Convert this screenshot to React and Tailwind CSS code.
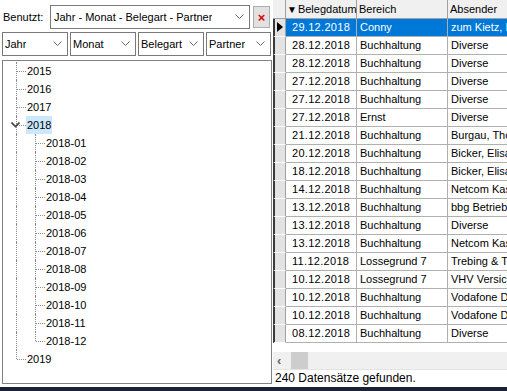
import React from "react";

const font = { fontFamily: '"Liberation Sans", Arial, sans-serif' };

const rows = [
  ["29.12.2018", "Conny", "zum Kietz, P"],
  ["28.12.2018", "Buchhaltung", "Diverse"],
  ["28.12.2018", "Buchhaltung", "Diverse"],
  ["27.12.2018", "Buchhaltung", "Diverse"],
  ["27.12.2018", "Buchhaltung", "Diverse"],
  ["27.12.2018", "Ernst", "Diverse"],
  ["21.12.2018", "Buchhaltung", "Burgau, Tho"],
  ["20.12.2018", "Buchhaltung", "Bicker, Elisa"],
  ["18.12.2018", "Buchhaltung", "Bicker, Elisa"],
  ["14.12.2018", "Buchhaltung", "Netcom Kas"],
  ["13.12.2018", "Buchhaltung", "bbg Betrieb"],
  ["13.12.2018", "Buchhaltung", "Diverse"],
  ["13.12.2018", "Buchhaltung", "Netcom Kas"],
  ["11.12.2018", "Lossegrund 7", "Trebing & Tr"],
  ["10.12.2018", "Lossegrund 7", "VHV Versich"],
  ["10.12.2018", "Buchhaltung", "Vodafone D"],
  ["10.12.2018", "Buchhaltung", "Vodafone D"],
  ["08.12.2018", "Buchhaltung", "Diverse"],
];

const months = ["01", "02", "03", "04", "05", "06", "07", "08", "09", "10", "11", "12"];

const Chevron = ({ className = "" }) => (
  <svg width="9" height="6" viewBox="0 0 9 6" className={className}>
    <path d="M0.5 0.5 L4.5 4.5 L8.5 0.5" fill="none" stroke="#6b6b6b" strokeWidth="1" />
  </svg>
);

const Combo = ({ label, className = "" }) => (
  <div
    className={`flex h-[24px] items-center justify-between border border-[#7a7a7a] bg-white pl-[2px] pr-[5px] text-[11px] text-black ${className}`}
  >
    <span className="truncate">{label}</span>
    <Chevron className="shrink-0" />
  </div>
);

const dotH = "border-t border-dotted border-[#8a8a8a]";
const dotV = "border-l border-dotted border-[#8a8a8a]";

const TreeRow = ({ children, selected, chevron, last, indent }) => (
  <div className="relative flex h-[18px] items-center">
    {indent && (
      <div className={`absolute left-[13px] top-0 ${dotV} h-[18px]`} />
    )}
    <div className={`absolute ${indent ? "left-[32px]" : "left-[13px]"} top-0 ${dotV} ${last ? "h-[9px]" : "h-[18px]"}`} />
    <div className={`${indent ? "ml-[33px]" : "ml-[14px]"} w-[9px] ${dotH}`} />
    {chevron && (
      <svg width="9" height="6" viewBox="0 0 9 6" className="absolute left-[8px] top-[6px]">
        <path d="M0.5 0.5 L4.5 4.5 L8.5 0.5" fill="none" stroke="#444" strokeWidth="1.6" />
      </svg>
    )}
    <span className={`px-[1px] leading-[18px] ${selected ? "bg-[#cce8ff]" : ""}`}>{children}</span>
  </div>
);

export default function App() {
  return (
    <div style={font} className="flex h-[391px] w-[507px] flex-col overflow-hidden bg-white text-[11px] text-black">
      <div className="flex min-h-0 flex-1">
        {/* left panel */}
        <div className="flex w-[273px] shrink-0 flex-col">
          <div className="flex h-[32px] items-center pl-[3px] pt-[2px]">
            <span className="w-[47px]">Benutzt:</span>
            <Combo label="Jahr - Monat - Belegart - Partner" className="w-[200px] pl-[3px]" />
            <div className="ml-[3px] flex h-[22px] w-[17px] items-center justify-center border border-[#adadad] bg-[#e1e1e1] text-[13px] font-bold leading-none text-[#e00000]">
              ×
            </div>
          </div>
          <div className="flex gap-[2px] pl-[2px]">
            <Combo label="Jahr" className="w-[66px]" />
            <Combo label="Monat" className="w-[66px]" />
            <Combo label="Belegart" className="w-[66px]" />
            <Combo label="Partner" className="w-[65px]" />
          </div>
          <div className="ml-[2px] mt-[4px] h-[324px] w-[270px] border border-[#828282] bg-white pt-[1px]">
            <TreeRow>2015</TreeRow>
            <TreeRow>2016</TreeRow>
            <TreeRow>2017</TreeRow>
            <TreeRow selected chevron>2018</TreeRow>
            {months.map((m, i) => (
              <TreeRow key={m} indent last={i === months.length - 1}>
                2018-{m}
              </TreeRow>
            ))}
            <TreeRow last>2019</TreeRow>
          </div>
        </div>

        {/* right grid */}
        <div className="flex min-w-0 flex-1 flex-col">
          <div className="flex h-[19px] border-b border-[#a0a0a0] bg-[#f0f0f0]">
            <div className="w-[13px] shrink-0 border-r border-[#a0a0a0]" />
            <div className="flex w-[71px] shrink-0 items-center border-r border-[#a0a0a0] pl-[1px]">
              <span className="mr-[1px] text-[10px]">▼</span>Belegdatum
            </div>
            <div className="flex w-[91px] shrink-0 items-center border-r border-[#a0a0a0] pl-[2px]">Bereich</div>
            <div className="flex flex-1 items-center whitespace-nowrap pl-[2px]">Absender</div>
          </div>
          {rows.map((r, i) => {
            const sel = i === 0;
            return (
              <div key={i} className="flex h-[18px] whitespace-nowrap">
                <div className="relative w-[13px] shrink-0 border-b border-l-2 border-r border-b-[#ffffff] border-l-[#3a3a3a] border-r-[#a0a0a0] bg-[#e3e3e3]">
                  {sel && (
                    <svg width="6" height="10" viewBox="0 0 6 10" className="absolute left-[2px] top-[3px]">
                      <path d="M0 0 L6 5 L0 10 Z" fill="#000" />
                    </svg>
                  )}
                </div>
                <div className={`flex w-[71px] shrink-0 items-center border-b border-r border-[#b0b0b0] pl-[6px] tracking-[0.3px] ${sel ? "bg-[#0078d7] text-white" : ""}`}>
                  {r[0]}
                </div>
                <div className={`flex w-[91px] shrink-0 items-center border-b border-r border-[#b0b0b0] pl-[3px] ${sel ? "bg-[#0078d7] text-white" : ""}`}>
                  {r[1]}
                </div>
                <div className={`flex flex-1 items-center overflow-hidden border-b border-[#b0b0b0] pl-[3px] ${sel ? "bg-[#0078d7] text-white" : ""}`}>
                  {r[2]}
                </div>
              </div>
            );
          })}
          <div className="h-[9px]" />
          <div className="flex h-[17px] items-center bg-[#f0f0f0]">
            <span className="ml-[4px] w-[12px] text-[13px] font-bold leading-none text-[#606060]">‹</span>
            <div className="ml-[2px] h-[17px] w-[17px] bg-[#cdcdcd]" />
          </div>
          <div className="flex h-[17px] items-center border-t border-[#e3e3e3] pl-[2px] text-[12px]">
            240 Datensätze gefunden.
          </div>
        </div>
      </div>
      <div className="h-[4px] bg-[#1b2231]" />
    </div>
  );
}
